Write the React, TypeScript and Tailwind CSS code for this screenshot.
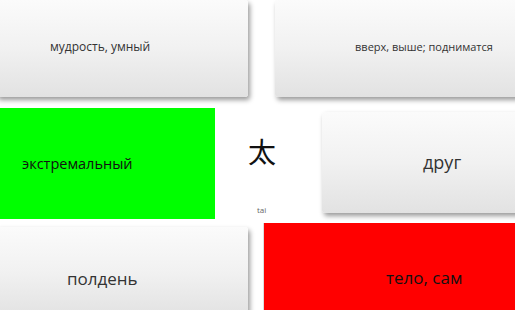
import React from "react";

const btn =
  "flex items-center rounded-[3px] bg-gradient-to-b from-[#fbfbfb] via-[#f1f1f1] to-[#e2e2e2] text-[#333] shadow-[2px_3px_5px_rgba(0,0,0,0.4)]";

export default function App() {
  return (
    <div
      className="flex h-[310px] w-[515px] flex-col overflow-hidden bg-white"
      style={{ fontFamily: '"Open Sans", "Noto Sans", "Noto Sans CJK JP", sans-serif' }}
    >
      {/* верхний ряд */}
      <div className="flex h-[104px] shrink-0 items-start">
        <div className={`${btn} ml-[-4px] h-[97px] w-[252px] pb-[3px] pl-[54px] text-[12px]`}>мудрость, умный</div>
        <div className={`${btn} ml-auto mr-[-4px] h-[97px] w-[244px] pb-[2px] pl-[80px] text-[11px]`}>
          вверх, выше; подниматся
        </div>
      </div>

      {/* средний ряд */}
      <div className="flex h-[118px] shrink-0 items-start">
        <div className="mt-[4px] flex h-[111px] w-[215px] items-center pl-[22px] text-[14.5px] text-[#111] bg-[#00ff00]">
          экстремальный
        </div>
        <div className="flex h-full w-[107px] flex-col items-start pl-[33px]">
          <div className="mt-[34px] text-[28px] leading-none text-[#111]">太</div>
          <div className="mt-[40px] pl-[9px] text-[8px] leading-none text-[#666]">tai</div>
        </div>
        <div className={`${btn} mt-[8px] mr-[-4px] h-[101px] flex-1 pl-[101px] text-[18px]`}>друг</div>
      </div>

      {/* нижний ряд */}
      <div className="flex flex-1 items-start">
        <div className={`${btn} ml-[-4px] mt-[5px] h-[90px] w-[252px] pl-[71px] pt-[14px] text-[17px]`}>полдень</div>
        <div className="ml-[15px] mt-[1px] flex h-[90px] flex-1 items-center border-l border-[#ddd] bg-[#ff0000] pl-[122px] pt-[20px] text-[17px] text-[#111]">
          тело, сам
        </div>
      </div>
    </div>
  );
}
